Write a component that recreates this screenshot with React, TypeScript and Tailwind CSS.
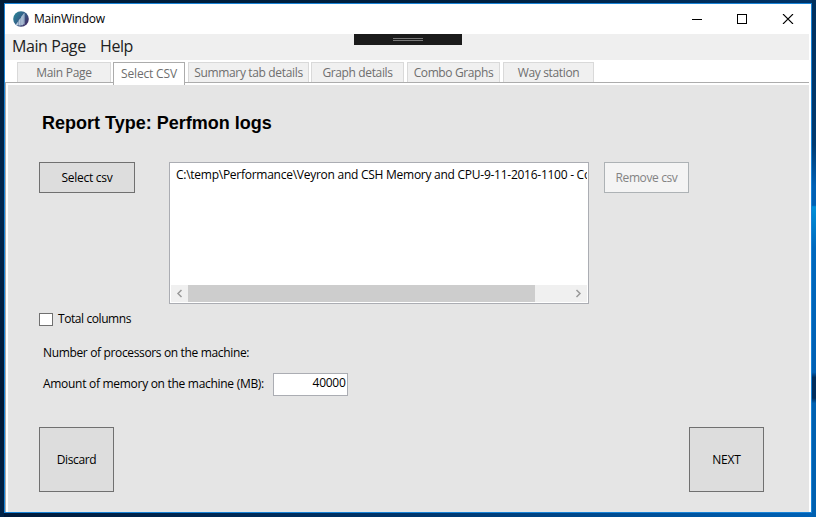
import React from "react";

function AppIcon() {
  return (
    <svg width="16" height="16" viewBox="0 0 16 16" className="shrink-0">
      <defs>
        <linearGradient id="ball" x1="0" y1="0.2" x2="1" y2="0.9">
          <stop offset="0" stopColor="#2a8597" />
          <stop offset="0.5" stopColor="#345a86" />
          <stop offset="1" stopColor="#45235c" />
        </linearGradient>
      </defs>
      <circle cx="8" cy="8" r="7.8" fill="url(#ball)" />
      <path d="M3 13.2 5.3 10.2V14.2H3ZM5.6 9.4 7.8 6.8V14.4H5.6ZM8.1 6 9.9 3.6V14.2H8.1ZM10.2 3 11.5 2V13.4H10.2Z" fill="#b4c6da" />
    </svg>
  );
}

function TitleBar() {
  return (
    <div className="flex h-[30px] items-center pl-2 pr-[17px]">
      <AppIcon />
      <span className="ml-[5px] text-[12px] leading-4 tracking-[-0.23px] text-black">MainWindow</span>
      <svg width="102" height="10" viewBox="0 0 102 10" className="ml-auto" fill="none" stroke="#000" shapeRendering="crispEdges">
        <path d="M0 5.5H10" />
        <rect x="45.5" y="0.5" width="9" height="9" />
        <path d="M91 0 101 10M101 0 91 10" shapeRendering="auto" strokeWidth="1.1" />
      </svg>
    </div>
  );
}

function MenuBar() {
  return (
    <div className="relative mr-0.5 flex h-[26px] bg-[#efefef] pl-[7px] text-[16px] leading-[25px] text-[#212121]">
      <span className="w-[88px] tracking-[-0.42px]">Main Page</span>
      <span className="tracking-[-0.42px]">Help</span>
      <div className="absolute left-[349px] top-0 flex h-[11px] w-[108px] flex-col items-center gap-px bg-[#1b1b1b] pt-1">
        <div className="h-px w-[30px] bg-[#777]" />
        <div className="h-px w-[30px] bg-[#777]" />
      </div>
    </div>
  );
}

const tabBase =
  "h-5 border border-b-0 border-[#d9d9d9] bg-[#f0f0f0] text-center leading-[20px] whitespace-nowrap";

function TabStrip() {
  return (
    <div className="mr-0.5 flex h-[25px] flex-col">
      <div className="z-10 -mb-[3px] flex h-[25px] shrink-0 items-start pl-3 pt-0.5 text-[12px] text-[#6e6e6e]">
        <div className={`${tabBase} w-[94px] tracking-[-0.27px]`}>Main Page</div>
        <div className="ml-0.5 h-[23px] w-[72px] border border-b-0 border-[#acacac] bg-white text-center leading-[22px] tracking-[-0.17px]">
          Select CSV
        </div>
        <div className={`${tabBase} ml-[3px] w-[121px] tracking-[-0.34px]`}>Summary tab details</div>
        <div className={`${tabBase} ml-0.5 w-[93px] tracking-[-0.36px]`}>Graph details</div>
        <div className={`${tabBase} ml-[3px] w-[93px] tracking-[-0.38px]`}>Combo Graphs</div>
        <div className={`${tabBase} ml-[3px] w-[91px] tracking-[-0.34px]`}>Way station</div>
      </div>
      <div className="h-[3px] shrink-0 border-l border-t border-[#acacac]" />
    </div>
  );
}

function FileList() {
  return (
    <div className="ml-[34px] flex h-[142px] w-[420px] flex-col justify-between border border-[#abadb3] bg-white p-px">
      <div className="overflow-hidden whitespace-nowrap pl-[5px] pt-[2px] leading-[18px] tracking-[-0.26px]">
        C:\temp\Performance\Veyron and CSH Memory and CPU-9-11-2016-1100 - Co
      </div>
      <div className="flex h-[17px] bg-[#f0f0f0]">
        <svg width="17" height="17" viewBox="0 0 17 17" fill="none" stroke="#999" strokeWidth="1.5"><path d="M10.5 5 7 8.5 10.5 12" /></svg>
        <div className="w-[347px] bg-[#cdcdcd]" />
        <svg width="17" height="17" viewBox="0 0 17 17" className="ml-auto" fill="none" stroke="#999" strokeWidth="1.5"><path d="M6.5 5 10 8.5 6.5 12" /></svg>
      </div>
    </div>
  );
}

function CsvPage() {
  return (
    <div className="flex flex-1 border-l border-[#acacac] pl-0.5 pr-0.5">
      <div className="flex-1 bg-[#e5e5e5] pl-[31px] text-[12px] text-black">
        <h1 className="ml-[3px] mt-[27px] font-['Liberation_Sans',Arial,sans-serif] text-[18px] font-bold leading-[22px]">Report Type: Perfmon logs</h1>
        <div className="mt-7 flex items-start">
          <button className="h-[31px] w-24 border border-[#707070] bg-[#ddd] tracking-[-0.27px]">Select csv</button>
          <FileList />
          <button className="ml-[15px] h-[31px] w-[85px] border border-[#adb2b5] bg-[#f4f4f4] tracking-[-0.38px] text-[#838383]">Remove csv</button>
        </div>
        <div className="mt-1.5 flex h-[18px] items-center">
          <span className="h-[13px] w-[14px] border border-[#707070] bg-white" />
          <span className="ml-[5px] tracking-[-0.42px]">Total columns</span>
        </div>
        <div className="ml-1 mt-4 h-[18px] leading-[18px] tracking-[-0.35px]">Number of processors on the machine:</div>
        <div className="ml-1 mt-[11px] flex h-[23px]">
          <span className="w-[230px] leading-[22px] tracking-[-0.29px]">Amount of memory on the machine (MB):</span>
          <span className="w-[75px] border border-[#abadb3] bg-white pr-[1.5px] text-right leading-[18px] tracking-[-0.28px]">40000</span>
        </div>
        <div className="mr-[45px] mt-[31px] flex h-[65px] justify-between">
          <button className="w-[75px] border border-[#707070] bg-[#ddd] tracking-[-0.38px]">Discard</button>
          <button className="w-[75px] border border-[#707070] bg-[#ddd] tracking-[-0.2px]">NEXT</button>
        </div>
      </div>
    </div>
  );
}

export default function App() {
  return (
    <div className="flex h-[517px] w-[816px] overflow-hidden bg-[#002b55] font-['Open_Sans','Noto_Sans',sans-serif]">
      <div className="w-1 bg-[linear-gradient(#001c38,#00264e_40%,#001733_78%,#002348)]" />
      <div className="flex flex-col">
        <div className="h-[3px] w-[808px] bg-[linear-gradient(to_right,#001c38,#00203f_60%,#003468)]" />
        <div className="flex h-[510px] w-[808px] flex-col border border-[#1883d7] bg-white">
          <TitleBar />
          <MenuBar />
          <TabStrip />
          <CsvPage />
        </div>
        <div className="h-1 bg-[linear-gradient(to_right,#001a3a,#00356b_50%,#0061b5)]" />
      </div>
      <div className="w-1 bg-[linear-gradient(#002f5d,#003a70_28%,#0060b4_36%,#0060b4_39.7%,#0090d8_40%,#0068bd_48%,#0060b4_72%,#002d5c_73%,#002d5c_77%,#0060b0_78%)]" />
    </div>
  );
}
